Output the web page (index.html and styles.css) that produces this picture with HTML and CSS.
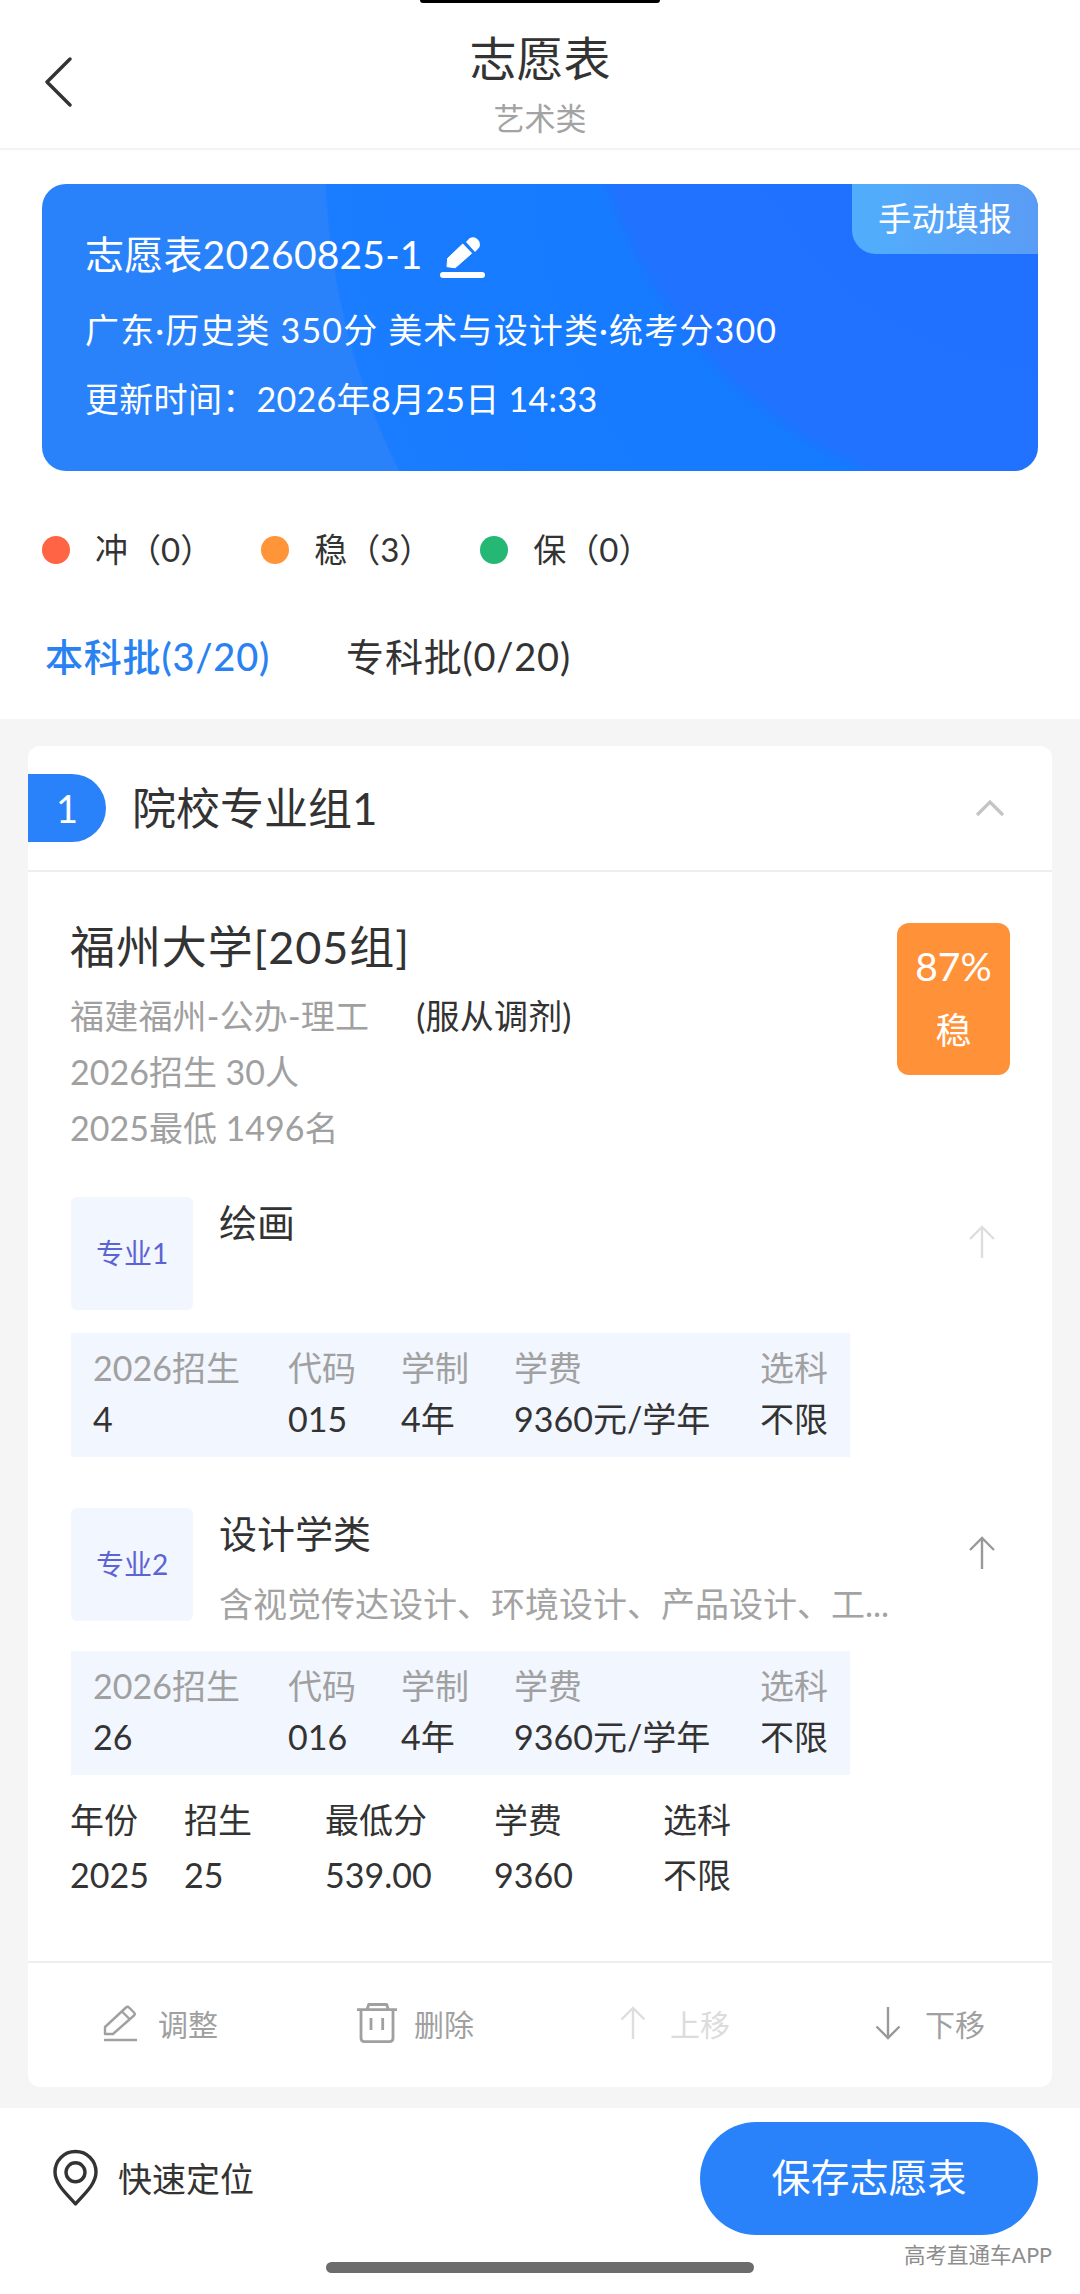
FILE: index.html
```html
<!DOCTYPE html>
<html lang="zh-CN">
<head>
<meta charset="utf-8">
<title>志愿表</title>
<link rel="stylesheet" href="styles.css">
</head>
<body>
<div class="notch"></div>
<header class="topbar">
  <svg class="back" viewBox="0 0 27 50"><path d="M25 2 2 25l23 23" fill="none" stroke="#333" stroke-width="3.4" stroke-linecap="round" stroke-linejoin="round"/></svg>
  <div class="topbar-text">
    <div class="page-title">志愿表</div>
    <div class="page-sub">艺术类</div>
  </div>
</header>
<section class="summary">
  <div class="hero">
    <div class="hero-tag">手动填报</div>
    <div class="hero-title">志愿表20260825-1
      <svg class="hero-edit" viewBox="0 0 45 43"><path d="M7 31.700 7.700 23.300 22.700 9 31.700 18.300 15.300 32.700z" fill="#fff" stroke="#fff" stroke-width="1" stroke-linejoin="round"/><path d="M26 7 29.500 3.200A7 7 0 0 1 39 12.700L35 17z" fill="#fff"/><rect x="0" y="37" width="45" height="6" rx="3" fill="#fff"/></svg>
    </div>
    <div class="hero-line hero-line-a">广东·历史类 350分 美术与设计类·统考分300</div>
    <div class="hero-line hero-line-b">更新时间：2026年8月25日 14:33</div>
  </div>
  <div class="legend">
    <div class="legend-item"><i class="dot dot-red"></i>冲（0）</div>
    <div class="legend-item"><i class="dot dot-orange"></i>稳（3）</div>
    <div class="legend-item"><i class="dot dot-green"></i>保（0）</div>
  </div>
  <div class="tabs">
    <div class="tab tab-active">本科批(3/20)</div>
    <div class="tab">专科批(0/20)</div>
  </div>
</section>
<main class="content">
  <article class="card">
    <div class="card-head">
      <div class="card-num">1</div>
      <div class="card-name">院校专业组1</div>
      <svg class="chev" viewBox="0 0 30 18"><path d="M2 16 15 3l13 13" fill="none" stroke="#c4c4c4" stroke-width="3.200"/></svg>
    </div>
    <div class="card-body">
      <div class="uni">
        <div class="uni-info">
          <div class="uni-name">福州大学[205组]</div>
          <div class="uni-line uni-line-first">福建福州-公办-理工<span class="uni-adjust">(服从调剂)</span></div>
          <div class="uni-line">2026招生 30人</div>
          <div class="uni-line">2025最低 1496名</div>
        </div>
        <div class="rate"><span class="rate-num">87%</span><span>稳</span></div>
      </div>

      <div class="major">
        <div class="major-tag">专业1</div>
        <div class="major-text"><div class="major-name">绘画</div></div>
        <svg class="arrow" viewBox="0 0 28 34"><path d="M14 33V2M2 14 14 2l12 12" fill="none" stroke="#dedede" stroke-width="2.400"/></svg>
      </div>
      <div class="grid-table plan">
        <span class="th">2026招生</span><span class="th">代码</span><span class="th">学制</span><span class="th">学费</span><span class="th">选科</span>
        <span>4</span><span>015</span><span>4年</span><span>9360元/学年</span><span>不限</span>
      </div>

      <div class="major major-second">
        <div class="major-tag">专业2</div>
        <div class="major-text">
          <div class="major-name">设计学类</div>
          <div class="major-desc">含视觉传达设计、环境设计、产品设计、工...</div>
        </div>
        <svg class="arrow" viewBox="0 0 28 34"><path d="M14 33V2M2 14 14 2l12 12" fill="none" stroke="#999" stroke-width="2.400"/></svg>
      </div>
      <div class="grid-table plan">
        <span class="th">2026招生</span><span class="th">代码</span><span class="th">学制</span><span class="th">学费</span><span class="th">选科</span>
        <span>26</span><span>016</span><span>4年</span><span>9360元/学年</span><span>不限</span>
      </div>
      <div class="grid-table history">
        <span>年份</span><span>招生</span><span>最低分</span><span>学费</span><span>选科</span>
        <span>2025</span><span>25</span><span>539.00</span><span>9360</span><span>不限</span>
      </div>
    </div>
    <div class="actions">
      <div class="action">
        <svg class="icon-edit" viewBox="0 0 35 37"><path d="M2 29V22L23 2.500C24 1.600 25 1.600 26 2.500L31 7.500C32 8.500 32 9.500 31 10.500L10 29zM19 6.500 27 14.500" fill="none" stroke="#a0a0a0" stroke-width="2.400" stroke-linejoin="round"/><path d="M1 35h33" stroke="#a0a0a0" stroke-width="2.600"/></svg>
        调整
      </div>
      <div class="action">
        <svg class="icon-trash" viewBox="0 0 40 40"><path d="M0 6.700h40M10 6.700 11.700 1.500h18L31.300 6.700M4 6.700V35c0 2.200 1.400 3.600 3.600 3.600h24.800c2.200 0 3.600-1.400 3.600-3.600V6.700M14 15v12M25.700 15v12" fill="none" stroke="#a0a0a0" stroke-width="2.800" stroke-linejoin="round"/></svg>
        删除
      </div>
      <div class="action action-off">
        <svg class="icon-move" viewBox="0 0 26 34"><path d="M13 33V2M1.500 13.500 13 2l11.500 11.500" fill="none" stroke="#dedede" stroke-width="2.400"/></svg>
        上移
      </div>
      <div class="action">
        <svg class="icon-move" viewBox="0 0 26 34"><path d="M13 1v31M1.500 20.500 13 32l11.500-11.500" fill="none" stroke="#999" stroke-width="2.400"/></svg>
        下移
      </div>
    </div>
  </article>
</main>
<footer class="footer">
  <div class="footer-row">
    <div class="locate">
      <svg class="pin" viewBox="0 0 46 57"><path d="M23.500 2.500C35 2.500 44 11.500 44 23C44 36 30 47 23.500 55C17 47 3 36 3 23C3 11.500 12 2.500 23.500 2.500z" fill="none" stroke="#333" stroke-width="3.400" stroke-linejoin="round"/><circle cx="23.500" cy="23.300" r="9.500" fill="none" stroke="#333" stroke-width="3.400"/></svg>
      快速定位
    </div>
    <div class="save">保存志愿表</div>
  </div>
  <div class="home-bar"></div>
  <div class="watermark">高考直通车APP</div>
</footer>
</body>
</html>
```

FILE: styles.css
```css
* { box-sizing: border-box; }
html, body { margin: 0; padding: 0; }
body {
  position: relative;
  width: 1080px;
  height: 2294px;
  overflow: hidden;
  display: flex;
  flex-direction: column;
  background: #fff;
  color: #333;
  font-family: Lato, "Noto Sans CJK SC", "Noto Sans", sans-serif;
  font-size: 32px;
}
.notch {
  position: absolute;
  left: 420px;
  top: 0;
  width: 240px;
  height: 3px;
  background: #000;
  border-radius: 0 0 8px 8px;
}
.topbar {
  flex: none;
  display: grid;
  grid-template-columns: 1fr auto 1fr;
  height: 150px;
  padding-top: 30px;
  border-bottom: 2px solid #f3f3f3;
}
.back { width: 27px; height: 50px; margin: 27px 0 0 45px; }
.topbar-text { text-align: center; }
.page-title { font-size: 47px; line-height: 56px; color: #333; }
.page-sub { margin-top: 12px; font-size: 31px; line-height: 40px; color: #a3a3a3; }

.summary { flex: none; padding: 34px 42px 38px; }
.hero {
  position: relative;
  height: 287px;
  padding: 45px 0 0 43px;
  border-radius: 24px;
  color: #fff;
  background:
    radial-gradient(circle 487px at 1023px -155px, #1f6fff 0, #2072ff 98%, rgba(32,114,255,0) 101%),
    radial-gradient(circle 718px at 1000px -30px, #0f79ff 0, #1a7cff 99.700%, rgba(26,124,255,0) 100%),
    #2a82fb;
  overflow: hidden;
}
.hero-tag {
  position: absolute;
  right: 0;
  top: 0;
  width: 186px;
  height: 70px;
  padding-left: 26px;
  border-radius: 0 0 0 24px;
  background: linear-gradient(90deg, #51aefc, #5a9cf5);
  font-size: 33.500px;
  line-height: 68px;
  white-space: nowrap;
}
.hero-title {
  display: flex;
  align-items: center;
  gap: 17px;
  font-size: 39px;
  line-height: 50px;
  letter-spacing: .2px;
}
.hero-edit { width: 45px; height: 43px; margin-top: 5px; }
.hero-line { font-size: 34px; line-height: 50px; }
.hero-line-a { margin-top: 26px; letter-spacing: 1.150px; }
.hero-line-b { margin-top: 19px; letter-spacing: .3px; }

.legend { display: flex; gap: 48px; margin-top: 56px; }
.legend-item { display: flex; align-items: center; gap: 25px; font-size: 33px; line-height: 44px; color: #333; }
.dot { width: 28px; height: 28px; border-radius: 50%; margin-top: 2px; }
.dot-red { background: #ff6445; }
.dot-orange { background: #ff9438; }
.dot-green { background: #25b874; }

.tabs { display: flex; gap: 76px; margin-top: 60px; padding-left: 3px; }
.tab { font-size: 38px; line-height: 50px; color: #333; letter-spacing: .8px; }
.tab-active { color: #2a82f2; font-weight: 500; }

.content {
  flex: 1;
  min-height: 0;
  padding: 27px 28px 21px;
  background: #f5f5f5;
}
.card {
  height: 1341px;
  background: #fff;
  border-radius: 12px;
  overflow: hidden;
  display: flex;
  flex-direction: column;
}
.card-head {
  flex: none;
  height: 126px;
  display: flex;
  align-items: center;
  border-bottom: 2px solid #eeeeee;
}
.card-num {
  width: 78px;
  height: 68px;
  padding-left: 28px;
  border-radius: 0 34px 34px 0;
  background: #2a82fb;
  color: #fff;
  font-size: 38px;
  line-height: 68px;
}
.card-name { flex: 1; margin-left: 26px; font-size: 44px; line-height: 60px; color: #333; }
.chev { width: 30px; height: 18px; margin-right: 47px; }
.card-body { flex: 1; min-height: 0; padding: 47px 42px 0 43px; }
.uni { display: flex; justify-content: space-between; align-items: flex-start; }
.uni-info { margin-left: -1px; }
.uni-name { font-size: 45px; line-height: 56px; color: #333; letter-spacing: .9px; }
.uni-line { font-size: 34px; line-height: 56px; color: #a0a0a0; }
.uni-line-first { margin-top: 13px; letter-spacing: .2px; }
.uni-adjust { margin-left: 47px; color: #333; }
.rate {
  width: 113px;
  height: 152px;
  margin-top: 4px;
  padding-top: 11px;
  border-radius: 12px;
  background: #ff9138;
  color: #fff;
  font-size: 36px;
  line-height: 64px;
  text-align: center;
  display: flex;
  flex-direction: column;
}
.rate-num { font-size: 39px; }

.major { display: flex; margin-top: 41px; min-height: 113px; }
.major-second { margin-top: 51px; }
.major-tag {
  flex: none;
  width: 122px;
  height: 113px;
  border-radius: 6px;
  background: #f2f6fe;
  color: #5c64d4;
  font-size: 28px;
  line-height: 113px;
  text-align: center;
}
.major-text { flex: none; width: 685px; margin-left: 26px; }
.major-name { font-size: 38px; line-height: 50px; color: #333; }
.major-desc {
  margin-top: 24px;
  font-size: 34px;
  line-height: 44px;
  color: #a3a3a3;
  white-space: nowrap;
}
.arrow { flex: none; width: 28px; height: 34px; margin: 28px 0 0 64px; }

.grid-table { display: grid; font-size: 34px; line-height: 50px; color: #333; white-space: nowrap; }
.plan {
  width: 779px;
  height: 124px;
  margin-top: 23px;
  padding: 10px 0 13px 22px;
  row-gap: 1px;
  grid-template-columns: 195px 113px 113px 246px 1fr;
  background: #f2f6fe;
}
.major-second + .plan { margin-top: 25px; }
.th { color: #a0a0a0; }
.history {
  margin: 20px 0 0 -1px;
  row-gap: 5px;
  grid-template-columns: 114px 141px 169px 169px 1fr;
}

.actions {
  flex: none;
  height: 126px;
  display: grid;
  align-items: center;
  grid-template-columns: 254px 263px 255px auto;
  padding: 0 0 4px 75px;
  border-top: 2px solid #eeeeee;
  color: #a0a0a0;
  font-size: 30px;
}
.action { display: flex; align-items: center; }
.action-off { color: #dcdcdc; }
.icon-edit { width: 35px; height: 37px; margin-right: 20px; }
.icon-trash { width: 40px; height: 40px; margin-right: 17px; }
.icon-move { width: 26px; height: 34px; margin-right: 24px; }

.footer { position: relative; flex: none; height: 186px; padding: 14px 42px 0 52px; background: #fff; }
.footer-row { display: flex; justify-content: space-between; align-items: center; height: 113px; }
.locate { display: flex; align-items: center; gap: 20px; font-size: 34px; line-height: 50px; color: #333; }
.pin { width: 46px; height: 57px; margin-top: -2px; }
.save {
  width: 338px;
  height: 113px;
  border-radius: 57px;
  background: #2a82fb;
  color: #fff;
  font-size: 39px;
  line-height: 111px;
  text-align: center;
}
.home-bar { width: 428px; height: 11px; margin: 27px 0 0 274px; border-radius: 6px; background: #6c6c6c; }
.watermark { position: absolute; right: 28px; top: 132px; font-size: 21.500px; line-height: 30px; color: #8d8d8d; white-space: nowrap; }
```
